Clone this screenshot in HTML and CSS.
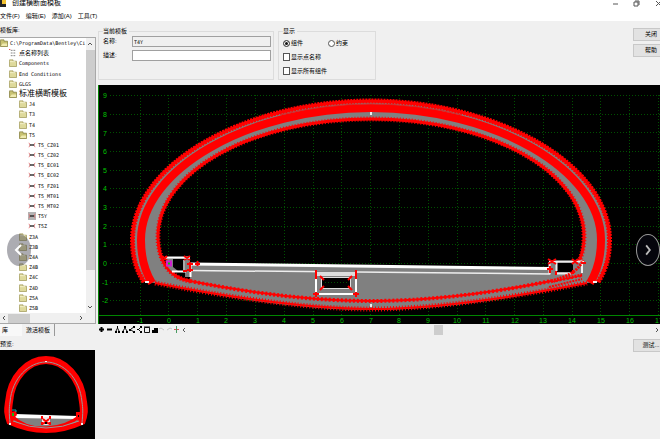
FILE: index.html
```html
<!DOCTYPE html>
<html lang="zh-CN">
<head>
<meta charset="utf-8">
<title>创建横断面模板</title>
<link rel="stylesheet" href="styles.css">
</head>
<body>
<svg class="defs" aria-hidden="true">
  <symbol id="folder" viewBox="0 0 9 9"><path d="M.5 2V1h4v1.500h4v6h-8z" fill="#ded99b" stroke="#aaa468"/><path d="M1 3h6" stroke="#f7f4cd"/></symbol>
  <symbol id="open" viewBox="0 0 9 9"><path d="M.5 2V1h4v1.500h4v6h-8z" fill="#c8c272" stroke="#8f8a4a"/><path d="M1 8l2-3h5v3z" fill="#efeab0"/></symbol>
  <symbol id="section" viewBox="0 0 9 9"><path d="M1 2l1.500 2.500L1 7M8 2L6.500 4.500 8 7" fill="none" stroke="#e77b7b"/><path d="M2 4.500h5" stroke="#222" stroke-width="1.500"/></symbol>
  <symbol id="points" viewBox="0 0 9 9"><path d="M2 1.500h6M2 4.500h6M2 7.500h6" stroke="#777" stroke-dasharray="2 1"/><path d="M0 .5h1.500" stroke="#e33"/></symbol>
</svg>
<div class="window">
  <header class="titlebar">
    <svg class="app-icon" viewBox="0 0 8 8"><path d="M0 0h8v8H0z" fill="#222"/><path d="M4 0h4v5H4z" fill="#f2c230"/></svg>
    <h1>创建横断面模板</h1>
    <svg class="window-controls" viewBox="0 0 54 10"><path d="M2 6h5M23 4h4v4h-4zM24 3h4v4M45 3l5 5M50 3l-5 5" fill="none" stroke="#555"/></svg>
  </header>
  <nav class="menu">
    <button>文件(F)</button><button>编辑(E)</button><button>添加(A)</button><button>工具(T)</button>
  </nav>
  <div class="content">
    <aside class="library">
      <h2>模板库:</h2>
      <div class="tree-panel">
        <ul class="tree">
          <li><svg><use href="#open"/></svg>C:\ProgramData\Bentley\Ci</li>
          <li class="d1 cjk"><svg><use href="#points"/></svg>点名称列表</li>
          <li class="d1"><svg><use href="#folder"/></svg>Components</li>
          <li class="d1"><svg><use href="#folder"/></svg>End Conditions</li>
          <li class="d1"><svg><use href="#folder"/></svg>GLGS</li>
          <li class="d1 wide"><svg><use href="#open"/></svg>标准横断模板</li>
          <li class="d2"><svg><use href="#folder"/></svg>J4</li>
          <li class="d2"><svg><use href="#folder"/></svg>T3</li>
          <li class="d2"><svg><use href="#folder"/></svg>T4</li>
          <li class="d2"><svg><use href="#open"/></svg>T5</li>
          <li class="d3"><svg><use href="#section"/></svg>T5_CZ01</li>
          <li class="d3"><svg><use href="#section"/></svg>T5_CZ02</li>
          <li class="d3"><svg><use href="#section"/></svg>T5_EC01</li>
          <li class="d3"><svg><use href="#section"/></svg>T5_EC02</li>
          <li class="d3"><svg><use href="#section"/></svg>T5_FZ01</li>
          <li class="d3"><svg><use href="#section"/></svg>T5_MT01</li>
          <li class="d3"><svg><use href="#section"/></svg>T5_MT02</li>
          <li class="d3 active"><svg><use href="#section"/></svg>T5Y</li>
          <li class="d3"><svg><use href="#section"/></svg>T5Z</li>
          <li class="d2"><svg><use href="#folder"/></svg>Z3A</li>
          <li class="d2"><svg><use href="#folder"/></svg>Z3B</li>
          <li class="d2"><svg><use href="#folder"/></svg>Z4A</li>
          <li class="d2"><svg><use href="#folder"/></svg>Z4B</li>
          <li class="d2"><svg><use href="#folder"/></svg>Z4C</li>
          <li class="d2"><svg><use href="#folder"/></svg>Z4D</li>
          <li class="d2"><svg><use href="#folder"/></svg>Z5A</li>
          <li class="d2"><svg><use href="#folder"/></svg>Z5B</li>
        </ul>
        <div class="vscroll">
          <svg viewBox="0 0 8 8"><path d="M2 5l2-2 2 2" fill="none" stroke="#555"/></svg>
          <div class="vthumb"></div>
          <svg viewBox="0 0 8 8"><path d="M2 3l2 2 2-2" fill="none" stroke="#555"/></svg>
        </div>
        <div class="hscroll">
          <svg viewBox="0 0 8 8"><path d="M5 2L3 4l2 2" fill="none" stroke="#555"/></svg>
          <div class="hthumb"></div>
          <svg viewBox="0 0 8 8"><path d="M3 2l2 2-2 2" fill="none" stroke="#555"/></svg>
        </div>
      </div>
      <div class="tabs"><button class="current">库</button><button>激活模板</button></div>
      <h2 class="preview-title">预览:</h2>
      <svg class="preview" viewBox="-8 349 103 90" role="img" aria-label="预览">
        <path d="M-8 349H95v90H-8z" fill="#000"/>
        <path d="M13 414L77 416 80 422Q46 435 13 422z" fill="#808080"/>
        <path d="M15 413L77 415v3L15 417z" fill="#fff"/>
        <g fill="none" stroke="red" stroke-width="8">
          <path d="M11 422C7 411 8 408 9 401C11 376 28 359 46 359S81 376 83 401C84 408 85 411 81 422"/>
          <path d="M9 421Q46 438 83 421" stroke-width="5"/>
          <path d="M12 415Q25 428 46 427T80 415" stroke-width="3"/>
        </g>
        <g fill="none" stroke="#999">
          <path d="M10 422C9 411 9 408 10 401C12 377 29 361 46 361S80 377 82 401C83 408 83 411 82 422"/>
          <path d="M13 420Q46 434 79 420"/>
        </g>
        <path d="M42 416h8v8h-8z" fill="#eee"/>
        <path d="M42 415v3M50 415v3M42 421v3M50 421v3M43 418l6 5M49 418l-6 5" stroke="red" stroke-width="2"/>
        <path d="M45 421h2v2h-2z"/>
        <path d="M10 411l6-1 1 4-4 4-3-3z" fill="red"/><path d="M12 412h2v3h-2z" fill="#14b414"/>
        <path d="M12 409h4v2" stroke="#17a4a8" fill="none"/>
        <path d="M76 411h5v5h-5z" fill="red"/><path d="M78 414h1v2h-1z"/>
        <path d="M9 422h2v2H9zM81 422h2v2h-2zM45 360h2v1h-2z" fill="#eee"/>
      </svg>
    </aside>
    <main>
      <div class="settings">
        <fieldset class="template">
          <legend>当前模板</legend>
          <label for="name">名称:</label><input id="name" value="T4Y" readonly>
          <label for="description">描述:</label><input id="description">
        </fieldset>
        <fieldset class="display">
          <legend>显示</legend>
          <label><input type="radio" name="show" checked>组件</label>
          <label><input type="radio" name="show">约束</label>
          <label class="line"><input type="checkbox">显示点名称</label>
          <label class="line"><input type="checkbox">显示所有组件</label>
        </fieldset>
        <div class="actions"><button>关闭</button><button>帮助</button></div>
      </div>
      <svg class="canvas" viewBox="98 85 571 239" role="img" aria-label="横断面">
        <path d="M98 85H669v239H98z" fill="#000"/>
        <g fill="none" stroke="#005000" stroke-dasharray="1 2">
          <path d="M110 95.500H669M110 114.500H669M110 132.500H669M110 151.500H669M110 170.500H669M110 188.500H669M110 207.500H669M110 226.500H669M110 244.500H669M110 263.500H669M110 282.500H669M110 300.500H669"/>
          <path d="M140.500 95V315M168.500 95V315M197.500 95V315M226.500 95V315M255.500 95V315M284.500 95V315M313.500 95V315M341.500 95V315M370.500 95V315M399.500 95V315M428.500 95V315M457.500 95V315M485.500 95V315M514.500 95V315M543.500 95V315M572.500 95V315M600.500 95V315M629.500 95V315M658.500 95V315"/>
        </g>
        <path d="M98.500 85V324M98 315.500H669" stroke="#008500" fill="none"/>
        <g class="ticks">
          <text x="105" y="98">9</text><text x="105" y="117">8</text><text x="105" y="136">7</text><text x="105" y="154">6</text><text x="105" y="173">5</text><text x="105" y="191">4</text><text x="105" y="210">3</text><text x="105" y="229">2</text><text x="105" y="247">1</text><text x="105" y="266">0</text><text x="105" y="285">-1</text><text x="105" y="303">-2</text>
          <text x="140" y="323">-1</text><text x="169" y="323">0</text><text x="198" y="323">1</text><text x="226" y="323">2</text><text x="255" y="323">3</text><text x="284" y="323">4</text><text x="313" y="323">5</text><text x="342" y="323">6</text><text x="371" y="323">7</text><text x="399" y="323">8</text><text x="428" y="323">9</text><text x="457" y="323">10</text><text x="486" y="323">11</text><text x="515" y="323">12</text><text x="543" y="323">13</text><text x="572" y="323">14</text><text x="601" y="323">15</text><text x="630" y="323">16</text><text x="659" y="323">17</text>
        </g>
        <path d="M190 264L551 269 556 272 551 281Q460 301 371 301T190 281z" fill="#808080"/>
        <path d="M144 282C135 268 132 255 132 240C132 165 244 100 371 100S610 165 610 240C610 255 607 268 598 282L587 283Q460 310 371 310T155 283zM190 281Q290 301 371 301T551 281C573 276 584 262 584 236C584 172 490 119 371 119S158 172 158 236C158 262 170 278 190 281z" fill="#808080" fill-rule="evenodd"/>
        <g fill="none" stroke="red">
          <path d="M144 282C135 268 132.500 255 132.500 240C132.500 165 244 101 371 101S609.500 165 609.500 240C609.500 255 607 268 598 282" stroke-width="3"/>
          <path d="M144 282C135 268 132.500 255 132.500 240C132.500 165 244 101 371 101S609.500 165 609.500 240C609.500 255 607 268 598 282" stroke-width="5" stroke-dasharray="2 1"/>
          <path d="M152 283C144 270 141 255 141 240C141 170 248 108 371 108S601 170 601 240C601 255 598 270 590 283" stroke-width="8"/>
          <path d="M280 115Q325 104 371 104T462 115" stroke="#d62929" stroke-width="1"/>
          <path d="M190 281C170 278 158 262 158 236C158 172 252 119 371 119S584 172 584 236C584 262 573 276 551 281" stroke-width="3"/>
          <path d="M190 281C170 278 158 262 158 236C158 172 252 119 371 119S584 172 584 236C584 262 573 276 551 281" stroke-width="5" stroke-dasharray="1 2"/>
          <path d="M155 283Q290 309 371 309T587 283" stroke-width="2"/>
          <path d="M155 283Q290 309 371 309T587 283" stroke-width="5" stroke-dasharray="1 2"/>
          <path d="M190 281Q290 301 371 301T551 281L582 275" stroke-width="2"/>
          <path d="M190 281Q290 301 371 301T551 281L582 275" stroke-width="4" stroke-dasharray="2 2"/>
          <path d="M549 287L582 279" stroke-width="2" stroke-dasharray="2 1"/>
        </g>
        <path d="M190 270.500L551 274" fill="none" stroke="#eee" stroke-width="1.500"/>
        <path d="M190 264L551 268.500" fill="none" stroke="#fff" stroke-width="3"/>
        <path d="M165 257h25v20h-5v-5h-13l-5-6z" fill="#808080"/>
        <path d="M173 259h11v12h-6l-5-4z"/>
        <path d="M165 257.500h25M172 271.500h14M190.500 265v12" stroke="#fff" stroke-width="2" fill="none"/>
        <path d="M184 260v10" stroke="#aaa" stroke-width="2"/>
        <path d="M549 261h35l-3 14-30 6z" fill="#808080"/>
        <path d="M556 263h17v9h-17z"/>
        <path d="M549 261.500h35M556 273.500h16M582 262v11M556.500 262v9M549.500 262v12" stroke="#eee" stroke-width="2" fill="none"/>
        <path d="M551 281C566 277 578 272 583 260M551 281L582 275" fill="none" stroke="red" stroke-width="3" stroke-dasharray="2 1"/>
        <path d="M315 271h41v24h-41z" fill="#808080"/>
        <path d="M317 272h38v4h-38z" fill="#ddd"/>
        <path d="M316 272V294H356V272" fill="none" stroke="#fff" stroke-width="2"/>
        <path d="M321.500 277.500h29v11h-29z" fill="#000" stroke="#ddd"/>
        <path d="M325 282.500h24" stroke="#005000" stroke-dasharray="1 2"/>
        <path d="M316 270v9M356 270v9M316 292v5M356 292v5M313 294h6M353 294h6M320 276l4 4M352 276l-4 4M320 290l4-4M352 290l-4-4M162 256l5 4M167 256l-4 4M184 256l6 4M190 256l-6 4M190 262v10M187 264h6M187 270h6M183 271h4M195 264h5M197.500 261v5M548 259l8 5M556 259l-8 5M572 259l6 5M578 259l-6 5M581 263h5M550 266v7M547 269h6M556 271v4M573 270v4" fill="none" stroke="red" stroke-width="2"/>
        <path d="M167 261.500h4v4h-4z" fill="#0c0" stroke="#d020d0" stroke-width="2"/>
        <path d="M145 281h4v2h-4zM593 281h4v2h-4zM370 112h2v3h-2zM370 304h2v3h-2z" fill="#eee"/>
      </svg>
      <div class="toolbar">
        <svg class="tools" viewBox="0 0 82 9">
          <path d="M1 4.500h5M3.500 2v5M9 4.500h5" stroke="#000" stroke-width="2"/>
          <path d="M17 6h2v2h-2zM20 6h2v2h-2zM19 1h1v2h-1zM24 6h2v2h-2zM28 6h2v2h-2zM26 1h2v2h-2zM31 4h2v2h-2zM35 1h2v2h-2zM35 6h2v2h-2zM39 4h2v1h-2zM42 1h2v2h-2zM42 6h2v2h-2zM54 8V5h2V3h4v5z"/>
          <path d="M18 6l1.500-3L21 6M25 6l2-3 2 3M33 4l3-2M33 5l3 2M41 4l2-2M41 5l2 2M46.500 2.500h5v5h-5zM46 2h6" fill="none" stroke="#111"/>
          <path d="M61 4l2-1 3 2M74 4l-2-1-3 2" fill="none" stroke="#c4c4c4"/>
          <path d="M76 4.500h5" stroke="#d55"/><path d="M78.500 1v7" stroke="#4a9a62"/>
        </svg>
        <div class="canvas-scroll">
          <svg viewBox="0 0 8 8"><path d="M5 2L3 4l2 2" fill="none" stroke="#555"/></svg>
          <div class="track"><div class="canvas-thumb"></div></div>
          <svg viewBox="0 0 8 8"><path d="M3 2l2 2-2 2" fill="none" stroke="#555"/></svg>
        </div>
      </div>
      <div class="test"><button>测试...</button></div>
    </main>
  </div>
</div>
<button class="slide previous" aria-label="上一张"><svg viewBox="0 0 24 32"><path d="M14 11l-5 5 5 5" fill="none" stroke="#fff" stroke-width="2"/></svg></button>
<button class="slide next" aria-label="下一张"><svg viewBox="0 0 24 32"><path d="M10 11l4 5-4 5" fill="none" stroke="#bbb" stroke-width="2"/></svg></button>
</body>
</html>
```
FILE: styles.css
```css
* { box-sizing: border-box; }
body {
  margin: 0;
  position: relative;
  min-height: 100vh;
  overflow: hidden;
  background: #f0f0f0;
  color: #000;
  font: 6px/10px "Liberation Sans", "Noto Sans CJK SC", sans-serif;
}
button, input { font: inherit; color: inherit; margin: 0; padding: 0; }
h1, h2 { margin: 0; font: inherit; }
svg { display: block; }
.defs { width: 0; height: 0; position: absolute; }

/* The window runs past the left, top and right edges of the view. */
.window { margin: -3px -9px 0 -8px; }
.titlebar { display: flex; align-items: center; height: 14px; padding: 0 4px 2px 6px; background: #fff; font-size: 7px; }
.app-icon { width: 8px; height: 8px; margin-right: 6px; }
.window-controls { width: 54px; height: 10px; margin-left: auto; }
.titlebar h1 { font-size: 7px; }
.menu { display: flex; gap: 6px; height: 10px; padding-left: 8px; background: #fff; }
.menu button { border: 0; background: none; line-height: 10px; }
.content { display: grid; grid-template-columns: 106px minmax(0, 1fr); }

.library { display: flex; flex-direction: column; }
.library h2 { padding: 4px 0 1px 8px; height: 16px; }
.library .preview-title { height: 14px; padding: 3px 0 1px 8px; }
.tree-panel {
  display: grid;
  grid-template-columns: minmax(0, 1fr) 9px;
  margin-right: 2px;
  padding-left: 8px;
  background: #fff;
  border: 1px solid #a8a8a8;
  border-left: 0;
}
.tree {
  display: grid;
  grid-auto-rows: 1fr;
  height: 275px;
  margin: 0;
  padding: 0;
  overflow: hidden;
  list-style: none;
  white-space: nowrap;
  font: 5px/10px "DejaVu Sans Mono", "Noto Sans CJK SC", monospace;
}
.tree li { display: flex; align-items: center; gap: 2px; }
.tree svg { width: 8px; height: 8px; flex: none; }
.tree .d1 { padding-left: 9px; }
.tree .d2 { padding-left: 19px; }
.tree .d3 { padding-left: 28px; }
.tree .cjk { font-size: 6px; }
.tree .wide { font-size: 8px; }
.tree .active svg { background: #b4b4b4; }
.vscroll { display: flex; flex-direction: column; background: #f0f0f0; }
.vscroll svg, .hscroll svg, .canvas-scroll svg { width: 8px; height: 8px; flex: none; }
.vscroll svg { margin: 2px 0; }
.vthumb { flex: 0 0 80%; background: #cdcdcd; }
.vscroll svg:last-child { margin-top: auto; }
.hscroll { grid-column: 1 / -1; display: flex; align-items: center; height: 10px; padding-right: 10px; background: #f0f0f0; }
.hthumb { width: 22px; height: 9px; background: #cdcdcd; }
.hscroll svg:last-child { margin-left: auto; }
.tabs { display: flex; height: 12px; }
.tabs button { border: 0; border-right: 1px solid #999; background: #f0f0f0; width: 33px; }
.tabs .current { background: #f8f8f8; width: 30px; padding-right: 4px; border: 0; }
.preview { width: 103px; }

.settings { display: flex; gap: 4px; height: 64px; padding-top: 6px; }
fieldset { margin: 0; padding: 0 2px 0 4px; border: 1px solid #dcdcdc; min-width: 0; height: 53px; }
legend { padding: 0 2px 0 0; line-height: 9px; }
.template { width: 176px; display: grid; grid-template-columns: 29px 1fr; grid-auto-rows: 11px; row-gap: 3px; }
.template input { border: 1px solid #a0a0a0; background: #fff; font: 5px "DejaVu Sans Mono", monospace; padding: 0 1px; min-width: 0; }
.template input:read-only { background: #f0f0f0; }
.display { width: 98px; display: grid; grid-template-columns: 1fr 1fr; grid-auto-rows: 14px; }
.display label { display: flex; align-items: center; gap: 1px; }
.display .line { grid-column: 1 / -1; }
.display input { appearance: none; width: 7px; height: 8px; border: 1px solid #555; background: #fff; }
.display input[type="radio"] { height: 7px; border-radius: 50%; }
.display input:checked { background: #111; box-shadow: inset 0 0 0 1px #fff; }
.actions { display: flex; flex-direction: column; gap: 3px; margin-left: auto; padding-top: 1px; }
.actions button, .test button { width: 36px; height: 13px; border: 1px solid #c8c8c8; background: #e2e2e2; line-height: 11px; }
.canvas { width: 100%; height: auto; }
.ticks { fill: #00c000; font-size: 7px; text-anchor: middle; }
.toolbar { display: flex; height: 11px; align-items: center; }
.tools { width: 82px; height: 9px; }
.canvas-scroll { display: flex; flex: 1; align-items: center; padding-right: 8px; }
.track { flex: 1; }
.canvas-thumb { width: 9px; height: 10px; margin-left: 53%; background: #cdcdcd; }
.test { display: flex; justify-content: flex-end; padding-top: 4px; }

/* Picture viewer arrows float over the window. */
.slide { position: absolute; top: 234px; width: 24px; height: 32px; border: 0; border-radius: 50%; }
.previous { left: 7px; background: rgb(70 70 85 / 45%); }
.next { right: 0; border: 1px solid #999; background: #05050c; }
.slide svg { width: 100%; height: 100%; }
```
